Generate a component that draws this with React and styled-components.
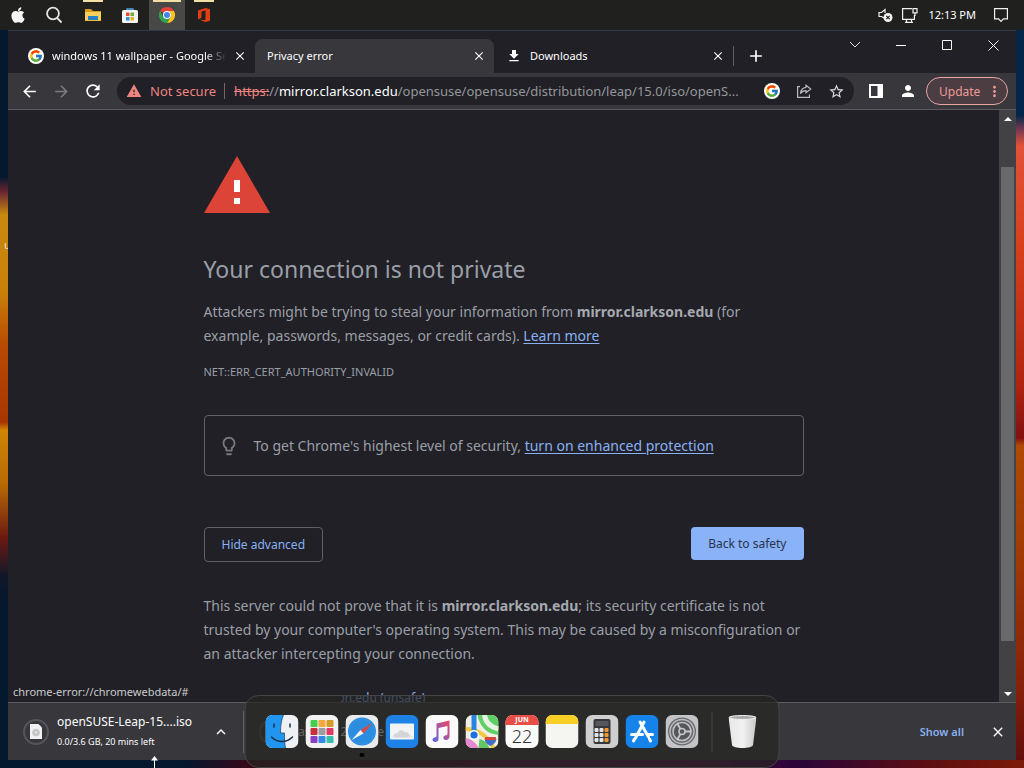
import React from "react";
import styled, { createGlobalStyle } from "styled-components";
import { FaApple } from "react-icons/fa";
import { FcGoogle } from "react-icons/fc";
import {
  MdArrowBack,
  MdArrowForward,
  MdRefresh,
  MdWarning,
  MdStarBorder,
  MdPerson,
  MdMoreVert,
  MdClose,
  MdAdd,
  MdDownload,
  MdLightbulbOutline,
  MdKeyboardArrowUp,
} from "react-icons/md";

const Global = createGlobalStyle`
  * { box-sizing: border-box; }
  body { margin: 0; background: #04182e; }
  body, button { font-family: "Noto Sans", "Open Sans", sans-serif; }
  button { background: none; border: 0; padding: 0; color: inherit; font-size: inherit; }
  svg { display: block; flex: none; }
`;

const Desktop = styled.div`
  position: relative;
  height: 100vh;
  min-height: 480px;
  overflow: hidden;
  display: flex;
  flex-direction: column;
  padding-bottom: 8px;
  background:
    linear-gradient(90deg, #04182e 18%, #3c0616 25%, #4a0730 50%, #52083a 66%, #2a0538 78%, #5a0d12 90%, #7c1a08) left bottom / 100% 8px no-repeat,
    linear-gradient(180deg, #04182e 23%, #6a2630 25%, #c98a10 28%, #c98008 38%, #b94a04 45%, #a83602 55%, #cf8404 56%, #b96a06 63%, #6c1a10 70%, #10182a 75%, #04182e 79%) left top / 8px 100% no-repeat,
    linear-gradient(180deg, #04264a 15%, #7c3a50 17%, #e25238 19%, #d8401c 32%, #b02410 50%, #821010 57%, #b04a04 58%, #a23a06 72%, #84200a 90%, #5c0c0c) right top / 8px 100% no-repeat,
    #04182e;
`;

const DesktopLabel = styled.span`
  position: absolute;
  left: 4px;
  top: 237px;
  font-size: 11px;
  line-height: 16px;
  color: #e8e0d0;
`;

const MenuBar = styled.header`
  flex: none;
  height: 30px;
  display: flex;
  align-items: stretch;
  justify-content: space-between;
  background: #20211f;
  color: #fff;
`;

const BarGroup = styled.div`
  display: flex;
  align-items: center;
  gap: ${(p) => p.$gap || 0}px;
  padding: 0 ${(p) => p.$right || 0}px 0 ${(p) => p.$left || 0}px;
`;

const TaskButton = styled.button`
  position: relative;
  width: 36px;
  height: 30px;
  display: flex;
  align-items: center;
  justify-content: center;
  color: #f4f4f4;
  background: ${(p) => (p.$active ? "#484947" : "none")};

  ${(p) =>
    p.$open &&
    `&::before {
      content: "";
      position: absolute;
      top: 0;
      left: ${p.$active ? 4 : 8}px;
      right: ${p.$active ? 4 : 8}px;
      height: 2px;
      background: #f2dfa4;
    }`}
`;

const Clock = styled.time`
  font-size: 11px;
  line-height: 16px;
  white-space: nowrap;
  padding: 0 9px 0 2px;
`;

const Window = styled.main`
  position: relative;
  flex: 1;
  min-height: 0;
  margin: 0 8px;
  display: flex;
  flex-direction: column;
  background: #202026;
  color: #e8eaed;
  border-top: 1px solid #2f3b46;
`;

const TabStrip = styled.div`
  flex: none;
  height: 42px;
  display: flex;
  align-items: flex-end;
`;

const Tab = styled.div`
  flex: 0 1 ${(p) => p.$basis || 239}px;
  min-width: 0;
  height: 34px;
  display: flex;
  align-items: center;
  gap: 8px;
  padding: 0 9px 0 ${(p) => p.$left || 12}px;
  font-size: 11px;
  line-height: 16px;
  color: #fff;
  border-radius: 8px 8px 0 0;
  background: ${(p) => (p.$active ? "#37373c" : "none")};
`;

const TabTitle = styled.span`
  flex: 1;
  min-width: 0;
  overflow: hidden;
  white-space: nowrap;
  ${(p) => p.$fade && "mask-image: linear-gradient(90deg, #000 88%, transparent);"}
`;

const IconButton = styled.button`
  flex: none;
  width: ${(p) => p.$w || 12}px;
  height: ${(p) => p.$h || 16}px;
  display: flex;
  align-items: center;
  justify-content: center;
  color: ${(p) => p.$color || "#fff"};
`;

const NewTab = styled.div`
  flex: 1;
  height: 34px;
  display: flex;
  align-items: center;

  &::before {
    content: "";
    width: 1px;
    height: 20px;
    margin-right: 10px;
    background: #5a5a60;
  }
`;

const WindowControls = styled.div`
  align-self: flex-start;
  display: flex;
`;

const Toolbar = styled.div`
  flex: none;
  height: 37px;
  display: flex;
  align-items: center;
  padding: 0 8px 0 5px;
  background: #37373c;
  border-bottom: 1px solid #5c5c60;
`;

const AddressBar = styled.div`
  flex: 1;
  min-width: 0;
  height: 28px;
  margin: 0 6px 0 8px;
  padding: 0 2px 0 9px;
  display: flex;
  align-items: center;
  border-radius: 14px;
  background: #202026;
  font-size: 13px;
  line-height: 20px;
`;

const Security = styled.button`
  display: flex;
  align-items: center;
  gap: 8px;
  color: #ee8580;
  white-space: nowrap;

  &::after {
    content: "";
    width: 1px;
    height: 16px;
    margin-right: 9px;
    background: #7d6264;
  }
`;

const Url = styled.div`
  flex: 1;
  min-width: 0;
  overflow: hidden;
  white-space: nowrap;
  color: #96979b;

  del { color: #ee8580; }
  b { font-weight: 400; color: #fff; }
`;

const UpdateButton = styled.button`
  flex: none;
  width: 82px;
  height: 28px;
  display: flex;
  align-items: center;
  justify-content: space-between;
  padding: 0 4px 0 12px;
  margin-left: 2px;
  border: 1px solid #e9a5a2;
  border-radius: 14px;
  background: #4b3d42;
  color: #f09a96;
  font-size: 12px;
`;

const Viewport = styled.div`
  flex: 1;
  min-height: 0;
  display: flex;
`;

const Page = styled.article`
  flex: 1;
  min-width: 0;
  overflow: hidden;
  padding: 46px 20px 0;
  color: #9a9fa6;
  font-size: 14px;
  line-height: 24px;

  a { color: #8ab0f4; text-underline-offset: 2px; }
  b { font-weight: 700; color: #a5a9af; }
`;

const Column = styled.div`
  max-width: 600px;
  margin: 0 auto;
`;

const Heading = styled.h1`
  margin: 40px 0 15px;
  font-size: 23px;
  line-height: 32px;
  font-weight: 400;
  white-space: nowrap;
`;

const Paragraph = styled.p`
  margin: 0;
`;

const ErrorCode = styled.p`
  margin: 14px 0 0;
  font-size: 11px;
  line-height: 20px;
`;

const Suggestion = styled.div`
  display: flex;
  align-items: center;
  gap: 14px;
  height: 61px;
  margin: 33px 0 51px;
  padding: 0 13px;
  border: 1px solid #5f6166;
  border-radius: 4px;
`;

const Actions = styled.div`
  display: flex;
  justify-content: space-between;
  align-items: flex-start;
  margin-bottom: 32px;
`;

const ActionButton = styled.button`
  height: ${(p) => (p.$primary ? 33 : 35)}px;
  padding: 0 17px;
  border-radius: 4px;
  border: ${(p) => (p.$primary ? "0" : "1px solid #5f6166")};
  background: ${(p) => (p.$primary ? "#8ab2f8" : "none")};
  color: ${(p) => (p.$primary ? "#27344c" : "#8ab0f4")};
  font-size: 12px;
`;

const ProceedLink = styled.p`
  margin: 22px 0 0;
  font-size: 12px;
  line-height: 20px;

  a { text-decoration: none; }
`;

const ScrollTrack = styled.div`
  flex: none;
  width: 17px;
  display: flex;
  flex-direction: column;
  align-items: center;
  padding: 6px 0 5px;
  background: #424244;
`;

const ScrollThumb = styled.div`
  width: 13px;
  flex: 473;
  margin-top: 46px;
  background: #68696b;
`;

const ScrollGap = styled.div`
  flex: 51;
`;

const StatusBubble = styled.output`
  position: absolute;
  left: 0;
  bottom: 58px;
  width: 333px;
  height: 18px;
  padding-left: 5px;
  background: #202026;
  color: #c9cacc;
  font-size: 11px;
  line-height: 16px;
`;

const Shelf = styled.footer`
  flex: none;
  height: 58px;
  display: flex;
  align-items: center;
  padding: 0 12px 0 0;
  border-top: 1px solid #5c5c60;
  background: #37373c;
`;

const DownloadItem = styled.div`
  display: flex;
  align-items: center;
  width: ${(p) => p.$w}px;
  height: 42px;
  padding-left: 14px;
  border-right: 1px solid #606065;
`;

const DownloadText = styled.div`
  flex: 1;
  padding-left: 7px;
  color: #fff;
  white-space: nowrap;
`;

const FileName = styled.div`
  font-size: 12px;
  line-height: 20px;
`;

const FileStatus = styled.div`
  font-size: 9px;
  line-height: 20px;
`;

const CoveredName = styled.div`
  display: flex;
  gap: 30px;
  padding-left: 12px;
  color: #fff;
  font-size: 12px;
  line-height: 20px;
`;

const ShelfActions = styled.div`
  display: flex;
  align-items: center;
  gap: 28px;
  margin-left: auto;
`;

const ShowAll = styled.button`
  color: #8ab0f4;
  font-size: 11px;
  font-weight: 600;
`;

const Dock = styled.nav`
  position: absolute;
  left: 50%;
  bottom: 0;
  transform: translateX(-50%);
  display: flex;
  align-items: center;
  gap: 7px;
  height: 73px;
  padding: 0 22px 0 20px;
  border: 1px solid #454643;
  border-radius: 14px;
  background: rgba(38, 38, 34, 0.72);
`;

const DockButton = styled.button`
  position: relative;
  width: ${(p) => p.$w || 33}px;
  height: 33px;

  ${(p) =>
    p.$running &&
    `&::after {
      content: "";
      position: absolute;
      left: 14px;
      top: 38px;
      width: 5px;
      height: 4px;
      border-radius: 50%;
      background: #000;
    }`}
`;

const DockDivider = styled.span`
  width: 1px;
  height: 40px;
  margin: 0 9px 0 6px;
  background: #474846;
`;

const CalendarTile = styled.span`
  display: block;
  height: 33px;
  border-radius: 7px;
  background: #fbfbfb;
  color: #333;
  font-size: 18px;
  line-height: 22px;
  font-weight: 300;
  text-align: center;

  small {
    display: block;
    border-radius: 7px 7px 0 0;
    background: #ea4d45;
    color: #fff;
    font-size: 7px;
    line-height: 10px;
    font-weight: 700;
  }
`;

const Cursor = styled.svg`
  position: absolute;
  left: 150px;
  bottom: 0;
`;

const ChromeIcon = () => (
  <svg width="16" height="16" viewBox="0 0 32 32">
    <path d="M16 0A16 16 0 0 1 29.9 8H16A8 8 0 0 0 9 12L2.1 8A16 16 0 0 1 16 0Z" fill="#e5413a" />
    <path d="M29.9 8A16 16 0 0 1 16 32L23 20A8 8 0 0 0 16 8Z" fill="#fbc31b" />
    <path d="M2.1 8 9 20A8 8 0 0 0 23 20L16 32A16 16 0 0 1 2.1 8Z" fill="#2fa350" />
    <circle cx="16" cy="16" r="8" fill="#fff" />
    <circle cx="16" cy="16" r="6" fill="#4285e8" />
  </svg>
);

const FolderIcon = () => (
  <svg width="18" height="16" viewBox="0 0 18 16">
    <path d="M1 2h6l2 2h8v5H1z" fill="#d99a1d" />
    <path d="M1 5h16v9H1z" fill="#f8cf59" />
    <path d="M4 9h10v5H4z" fill="#2580c8" />
    <path d="M1 13h16v1H1z" fill="#f3bb3a" />
  </svg>
);

const StoreIcon = () => (
  <svg width="16" height="17" viewBox="0 0 16 17">
    <path d="M5 4V2h6v2" fill="none" stroke="#4aa8e8" strokeWidth="1.3" />
    <rect x="0" y="3" width="16" height="13" rx="1.5" fill="#f4f4f4" />
    <path d="M4 5.500h3.500V9H4z" fill="#e34c30" />
    <path d="M8.500 5.500H12V9H8.500z" fill="#6daf35" />
    <path d="M4 10h3.500v3.500H4z" fill="#2b91d8" />
    <path d="M8.500 10H12v3.500H8.500z" fill="#efb526" />
  </svg>
);

const OfficeIcon = () => (
  <svg width="14" height="16" viewBox="0 0 14 16">
    <path d="M1 3.5 8.5 1 13 2.3v11.4L8.5 15 2.5 12.8l6 .2V3.5L4.5 4.6v6.2L1 12.4Z" fill="#e13e12" />
  </svg>
);

const SearchIcon = () => (
  <svg width="18" height="18" viewBox="0 0 18 18" fill="none" stroke="#e6e6e6" strokeWidth="1.8">
    <circle cx="8" cy="7.5" r="5.9" />
    <path d="m12 11.8 4.6 4.7" />
  </svg>
);

const MutedIcon = () => (
  <svg width="15" height="16" viewBox="0 0 15 16">
    <path d="M6 11 3.5 9.5H1v-4h2.5L7 2.5V6" fill="none" stroke="#eee" strokeWidth="1.2" />
    <circle cx="10" cy="10.5" r="4.5" fill="#f2f2f2" />
    <path d="m8.3 8.8 3.4 3.4m0-3.4-3.4 3.4" stroke="#222" strokeWidth="1.2" />
  </svg>
);

const NetworkIcon = () => (
  <svg width="17" height="17" viewBox="0 0 17 17" fill="none" stroke="#f0f0f0" strokeWidth="1.2">
    <path d="M11 1.6H1.6v10.8h11.8V8M4 15.4h8M5.5 12.4v3m5-3v3" />
    <path d="M12 1.6h4v4.2h-4zM14 6v2.5h-1" />
  </svg>
);

const NotificationIcon = () => (
  <svg width="16" height="16" viewBox="0 0 16 16" fill="none" stroke="#f0f0f0" strokeWidth="1.2">
    <path d="M1.6 1.6h12.8v10.2h-4L8 14.4l-2.4-2.6h-4z" />
  </svg>
);

const GoogleBadge = () => (
  <svg width="16" height="16" viewBox="0 0 16 16">
    <circle cx="8" cy="8" r="8" fill="#fff" />
    <FcGoogle x="1" y="1" width="14" height="14" size={14} />
  </svg>
);

const ShareIcon = () => (
  <svg width="16" height="16" viewBox="0 0 16 16" fill="none" stroke="#b9babd" strokeWidth="1.2">
    <path d="M4 3.6H1.6v10.8h11.8v-2.8" />
    <path d="M10 2.2 14.7 6 10 9.8V7.7C7.4 7.7 5.8 8.4 4.4 10.6 4.8 7 6.7 4.7 10 4.3Z" />
  </svg>
);

const PanelIcon = () => (
  <svg width="14" height="14" viewBox="0 0 14 14">
    <path d="M1 1h12v12H1z" fill="none" stroke="#fff" strokeWidth="2" />
    <path d="M8.5 1H13v12H8.5z" fill="#fff" />
  </svg>
);

const WarningTriangle = () => (
  <svg width="66" height="57" viewBox="0 0 66 57">
    <path d="M33 0 66 57H0Z" fill="#db4437" />
    <path d="M30 24h6v12h-6zM30 42h6v6h-6z" fill="#fff" />
  </svg>
);

const FileIcon = () => (
  <svg width="28" height="28" viewBox="0 0 28 28">
    <circle cx="14" cy="14" r="12" fill="none" stroke="#56575c" strokeWidth="2" />
    <path d="M8 6h8.500L20 9.500V21H8z" fill="#f1f1f1" />
    <circle cx="14" cy="14.500" r="3.800" fill="#c4c6c7" />
    <circle cx="14" cy="14.500" r="1" fill="#eee" />
  </svg>
);

const Tile = ({ fill, children }) => (
  <svg width="33" height="33" viewBox="0 0 33 33">
    <rect width="33" height="33" rx="7" fill={fill} />
    {children}
  </svg>
);

const Finder = () => (
  <Tile fill="#eef1f4">
    <path d="M7 0h11c-2 5-3 10-3 18h4c0 5 0 10 1 15H7a7 7 0 0 1-7-7V7a7 7 0 0 1 7-7Z" fill="#2196f0" />
    <path d="M18 0c-2 5-3 10-3 18h4c0 5 0 10 1 15" fill="none" stroke="#2a4a68" strokeWidth=".8" />
    <path d="M8.500 9v3M24.500 9v3M6 22c6 6 15 6 21 0" fill="none" stroke="#173047" strokeWidth="1.500" strokeLinecap="round" />
  </Tile>
);

const launchColors = ["#43cf4c", "#f1a83c", "#d69b26", "#c9303c", "#9b9da1", "#e23864", "#8b3fc4", "#3589e6", "#37bfa8"];

const Launchpad = () => (
  <Tile fill="#f2f2f2">
    {launchColors.map((color, i) => (
      <rect key={color} x={5 + (i % 3) * 8} y={5 + Math.floor(i / 3) * 8} width="7" height="7" rx="1" fill={color} />
    ))}
  </Tile>
);

const Safari = () => (
  <Tile fill="#e9ebed">
    <circle cx="16.500" cy="16.500" r="14" fill="#2b8de0" />
    <circle cx="16.500" cy="16.500" r="12.500" fill="none" stroke="#5aa9e8" strokeWidth="1" strokeDasharray=".6 1.600" />
    <path d="m27 8-9 10.500-3-3.500z" fill="#e4463b" />
    <path d="m6 25 9-10 3 3.500z" fill="#f4f6f8" />
  </Tile>
);

const Mail = () => (
  <Tile fill="#1d81e6">
    <rect x="4.500" y="8.500" width="24" height="16" rx="1" fill="#f2f3f4" />
    <path d="M9 22.500c-2-3 1-5 3-4 1-4 6-4 7-1 3-1 6 2 5 5z" fill="#d3d5d7" />
    <path d="m5 24 6-6m17 6-6-6" stroke="#d7d9db" strokeWidth=".8" />
  </Tile>
);

const Music = () => (
  <Tile fill="#fafafa">
    <defs>
      <linearGradient id="note" x1="1" y1="0" x2="0" y2="1">
        <stop offset="0" stopColor="#ee4561" />
        <stop offset="1" stopColor="#5d68e8" />
      </linearGradient>
    </defs>
    <path
      d="M11 8.500 24 5.500v16c0 2-1.500 3.300-3.600 3.500-3 0-3.400-3.700-.8-4.500 1.700-.5 2.400-.5 2.400-2v-7.500l-9 2V24c0 1.800-1.300 3-3.300 3-3.200 0-3.500-3.600-.9-4.400 1.600-.4 2.200-.5 2.200-2z"
      fill="url(#note)"
    />
  </Tile>
);

const Maps = () => (
  <svg width="33" height="33" viewBox="0 0 33 33">
    <defs>
      <clipPath id="mapTile">
        <rect width="33" height="33" rx="7" />
      </clipPath>
    </defs>
    <g clipPath="url(#mapTile)">
      <path d="M0 0h33v33H0z" fill="#f1efe5" />
      <path d="M12 0h21v20C22 19 14 12 12 0Z" fill="#5fcf68" />
      <path d="M19 0c1 8 6 12 14 14" fill="none" stroke="#e9f3e4" strokeWidth="5" />
      <path d="M0 14c12 0 22 7 28 19" fill="none" stroke="#f6c840" strokeWidth="4" />
      <path d="M0 23c6 1 11 5 13 10H0Z" fill="#e58ad0" />
      <path d="M14 24c5 1 8 4 10 9H13Z" fill="#62c864" />
      <path d="M6 0h5v16H6z" fill="#2a83df" />
      <circle cx="8.500" cy="20" r="5" fill="#fff" />
      <circle cx="8.500" cy="20" r="3.600" fill="#1b72dc" />
      <path d="M20 22h10c2 4-1 7-5 9-4-2-7-5-5-9Z" fill="#3f6ec9" />
      <path d="M20 22h10l1 3H19Z" fill="#d9473f" />
    </g>
  </svg>
);

const Notes = () => (
  <Tile fill="#f5f5f1">
    <path d="M0 9V7a7 7 0 0 1 7-7h19a7 7 0 0 1 7 7v2Z" fill="#f9cf26" />
  </Tile>
);

const Calculator = () => (
  <Tile fill="#cfcfcf">
    <rect x="8" y="4" width="17" height="25" rx="2" fill="#36383c" />
    <rect x="10" y="6" width="13" height="5" fill="#54575b" />
    {[0, 1, 2].map((row) =>
      [0, 1, 2].map((col) => (
        <rect key={`${row}${col}`} x={9 + col * 5} y={13 + row * 5} width="4" height="4" rx="1" fill={col === 2 ? "#f39a2e" : "#e4e4e4"} />
      ))
    )}
  </Tile>
);

const AppStore = () => (
  <Tile fill="#1683ea">
    <path d="m18.500 7-8.500 16M14.500 7 23 22m-17-2.500h11m5 0h5M24 24l1 2M9 24l-1 2" fill="none" stroke="#fff" strokeWidth="3" strokeLinecap="round" />
  </Tile>
);

const Settings = () => (
  <Tile fill="#c3c4c8">
    <circle cx="16.500" cy="16.500" r="14" fill="#67696d" />
    <circle cx="16.500" cy="16.500" r="12" fill="none" stroke="#b8babd" strokeWidth="1.500" />
    <circle cx="16.500" cy="16.500" r="9" fill="#55575b" stroke="#c0c2c5" strokeWidth="1.500" />
    <circle cx="16.500" cy="16.500" r="3" fill="none" stroke="#c6c8ca" strokeWidth="1.500" />
    <path d="M19.500 16.500H26M15 19l-3.500 6M15 14l-3.500-6" stroke="#c6c8ca" strokeWidth="1.800" />
  </Tile>
);

const Trash = () => (
  <svg width="28" height="33" viewBox="0 0 28 33">
    <defs>
      <linearGradient id="bin" x1="0" x2="1">
        <stop offset="0" stopColor="#e6e6e6" />
        <stop offset=".5" stopColor="#f2f2f2" />
        <stop offset="1" stopColor="#c9c9c9" />
      </linearGradient>
    </defs>
    <path d="M0 2h28l-3.500 28c-.3 4-20.700 4-21 0Z" fill="url(#bin)" />
    <ellipse cx="14" cy="2.500" rx="13.500" ry="2" fill="#aaa" stroke="#f1f1f1" />
  </svg>
);

const dockApps = [
  ["Finder", Finder],
  ["Launchpad", Launchpad],
  ["Safari", Safari],
  ["Mail", Mail],
  ["Music", Music],
  ["Maps", Maps],
  ["Calendar", null],
  ["Notes", Notes],
  ["Calculator", Calculator],
  ["App Store", AppStore],
  ["Settings", Settings],
];

export default function App() {
  return (
    <Desktop>
      <Global />
      <DesktopLabel>u</DesktopLabel>
      <MenuBar>
        <BarGroup>
          <TaskButton aria-label="Apple menu"><FaApple size={18} /></TaskButton>
          <TaskButton aria-label="Search"><SearchIcon /></TaskButton>
          <BarGroup $gap={1} $left={3}>
            <TaskButton aria-label="Files" $open><FolderIcon /></TaskButton>
            <TaskButton aria-label="Store"><StoreIcon /></TaskButton>
            <TaskButton aria-label="Chrome" $open $active><ChromeIcon /></TaskButton>
            <TaskButton aria-label="Office" $open><OfficeIcon /></TaskButton>
          </BarGroup>
        </BarGroup>
        <BarGroup $gap={8} $right={15}>
          <MutedIcon />
          <NetworkIcon />
          <Clock>12:13 PM</Clock>
          <NotificationIcon />
        </BarGroup>
      </MenuBar>

      <Window>
        <TabStrip>
          <Tab $basis={247} $left={20}>
            <GoogleBadge />
            <TabTitle $fade>windows 11 wallpaper - Google Search</TabTitle>
            <IconButton aria-label="Close tab"><MdClose size={14} /></IconButton>
          </Tab>
          <Tab $active>
            <TabTitle>Privacy error</TabTitle>
            <IconButton aria-label="Close tab"><MdClose size={14} /></IconButton>
          </Tab>
          <Tab>
            <MdDownload size={16} />
            <TabTitle>Downloads</TabTitle>
            <IconButton aria-label="Close tab"><MdClose size={14} /></IconButton>
          </Tab>
          <NewTab>
            <IconButton $w={24} $h={24} aria-label="New tab"><MdAdd size={20} /></IconButton>
          </NewTab>
          <WindowControls>
            <IconButton $w={46} $h={28} aria-label="Search tabs">
              <svg width="12" height="8" viewBox="0 0 12 8" fill="none" stroke="#ddd"><path d="m1 1 5 5 5-5" /></svg>
            </IconButton>
            <IconButton $w={46} $h={28} aria-label="Minimize">
              <svg width="10" height="10" viewBox="0 0 10 10" stroke="#fff"><path d="M0 5.500h10" /></svg>
            </IconButton>
            <IconButton $w={46} $h={28} aria-label="Maximize">
              <svg width="10" height="10" viewBox="0 0 10 10" fill="none" stroke="#fff"><path d="M.5.5h9v9h-9z" /></svg>
            </IconButton>
            <IconButton $w={46} $h={28} aria-label="Close">
              <svg width="11" height="11" viewBox="0 0 11 11" stroke="#fff"><path d="m.5.500 10 10m0-10-10 10" /></svg>
            </IconButton>
          </WindowControls>
        </TabStrip>

        <Toolbar>
          <IconButton $w={32} $h={28} aria-label="Back"><MdArrowBack size={19} /></IconButton>
          <IconButton $w={32} $h={28} $color="#7c7c81" aria-label="Forward"><MdArrowForward size={19} /></IconButton>
          <IconButton $w={32} $h={28} aria-label="Reload"><MdRefresh size={20} /></IconButton>
          <AddressBar>
            <Security><MdWarning size={16} />Not secure</Security>
            <Url><del>https:</del>//<b>mirror.clarkson.edu</b>/opensuse/opensuse/distribution/leap/15.0/iso/openS...</Url>
            <IconButton $w={32} $h={28} aria-label="Search with Google"><GoogleBadge /></IconButton>
            <IconButton $w={32} $h={28} aria-label="Share"><ShareIcon /></IconButton>
            <IconButton $w={32} $h={28} $color="#dcdde0" aria-label="Bookmark"><MdStarBorder size={17} /></IconButton>
          </AddressBar>
          <IconButton $w={32} $h={28} aria-label="Side panel"><PanelIcon /></IconButton>
          <IconButton $w={32} $h={28} aria-label="Profile"><MdPerson size={18} /></IconButton>
          <UpdateButton>Update<MdMoreVert size={17} /></UpdateButton>
        </Toolbar>

        <Viewport>
          <Page>
            <Column>
              <WarningTriangle />
              <Heading>Your connection is not private</Heading>
              <Paragraph>
                Attackers might be trying to steal your information from <b>mirror.clarkson.edu</b> (for
                example, passwords, messages, or credit cards). <a href="#learn">Learn more</a>
              </Paragraph>
              <ErrorCode>NET::ERR_CERT_AUTHORITY_INVALID</ErrorCode>
              <Suggestion>
                <MdLightbulbOutline size={22} color="#77797e" />
                <span>
                  To get Chrome's highest level of security, <a href="#protection">turn on enhanced protection</a>
                </span>
              </Suggestion>
              <Actions>
                <ActionButton>Hide advanced</ActionButton>
                <ActionButton $primary>Back to safety</ActionButton>
              </Actions>
              <Paragraph>
                This server could not prove that it is <b>mirror.clarkson.edu</b>; its security certificate is not
                trusted by your computer's operating system. This may be caused by a misconfiguration or
                an attacker intercepting your connection.
              </Paragraph>
              <ProceedLink><a href="#proceed">Proceed to mirror.clarkson.edu (unsafe)</a></ProceedLink>
            </Column>
          </Page>
          <ScrollTrack>
            <svg width="8" height="5" viewBox="0 0 8 5"><path d="m0 5 4-4 4 4Z" fill="#fff" /></svg>
            <ScrollThumb />
            <ScrollGap />
            <svg width="8" height="5" viewBox="0 0 8 5"><path d="m0 0 4 4 4-4Z" fill="#fff" /></svg>
          </ScrollTrack>
        </Viewport>

        <StatusBubble>chrome-error://chromewebdata/#</StatusBubble>
        <Shelf>
          <DownloadItem $w={236}>
            <FileIcon />
            <DownloadText>
              <FileName>openSUSE-Leap-15....iso</FileName>
              <FileStatus>0.0/3.6 GB, 20 mins left</FileStatus>
            </DownloadText>
            <IconButton $w={44} $h={28} aria-label="Download options"><MdKeyboardArrowUp size={18} /></IconButton>
          </DownloadItem>
          <DownloadItem $w={234}>
            <FileIcon />
            <CoveredName><span>as</span><span>2</span><span>e</span></CoveredName>
          </DownloadItem>
          <ShelfActions>
            <ShowAll>Show all</ShowAll>
            <IconButton aria-label="Close downloads"><MdClose size={16} /></IconButton>
          </ShelfActions>
        </Shelf>
      </Window>

      <Dock aria-label="Dock">
        {dockApps.map(([name, Icon]) => (
          <DockButton key={name} aria-label={name} $running={name === "Safari"}>
            {Icon ? <Icon /> : <CalendarTile><small>JUN</small>22</CalendarTile>}
          </DockButton>
        ))}
        <DockDivider />
        <DockButton $w={28} aria-label="Trash"><Trash /></DockButton>
      </Dock>
      <Cursor width="9" height="12" viewBox="0 0 9 12">
        <path d="M4.500 0 8 4.500H5V12H4V4.500H1Z" fill="#fff" />
      </Cursor>
    </Desktop>
  );
}
